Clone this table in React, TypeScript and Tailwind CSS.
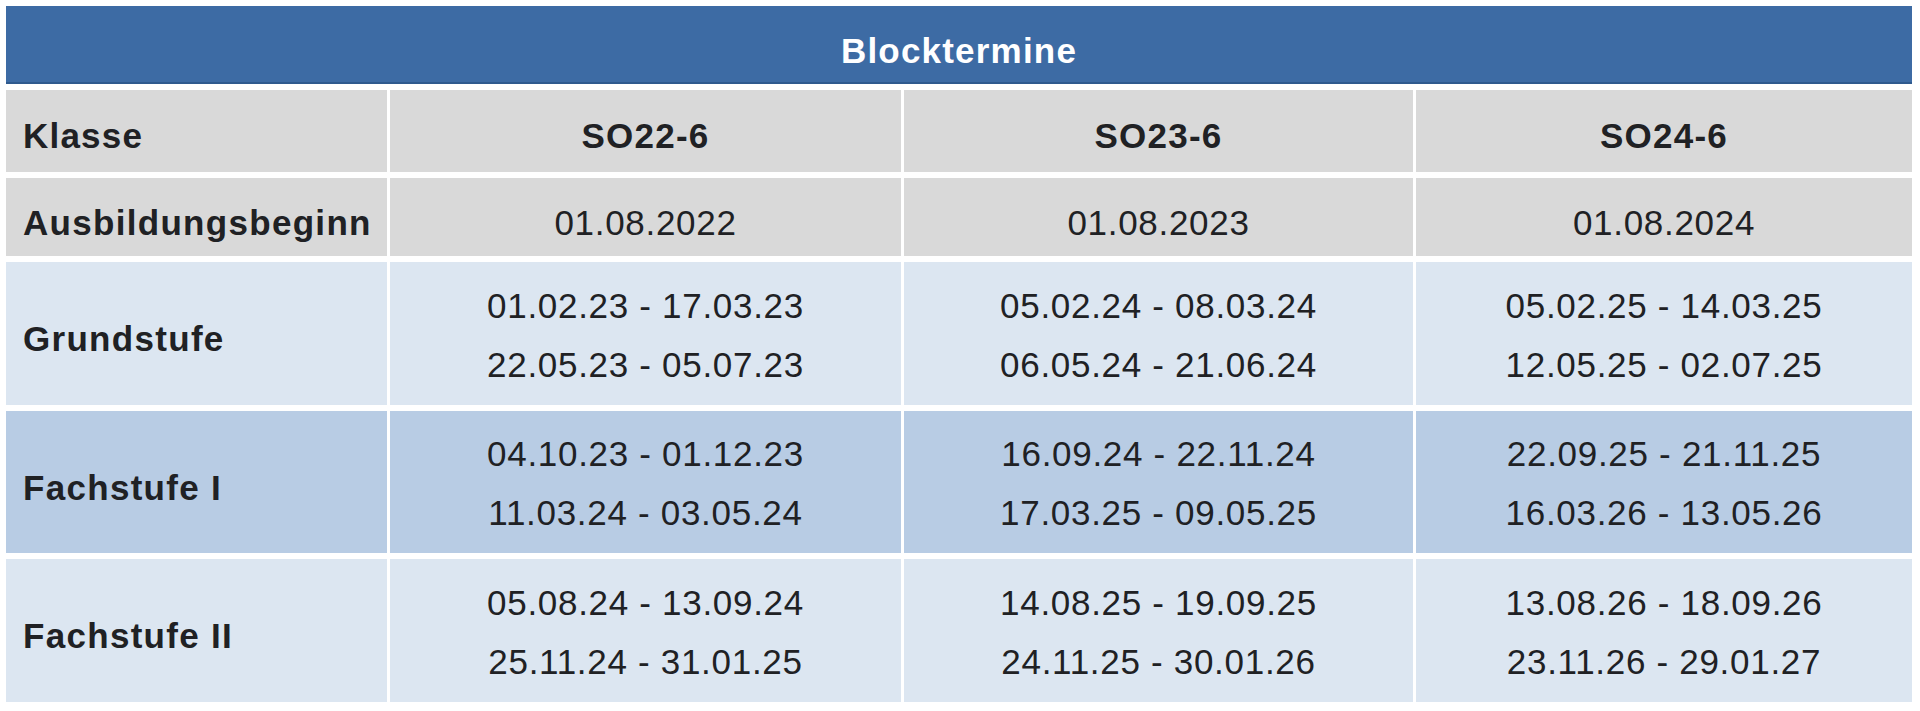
const columns = ['SO22-6', 'SO23-6', 'SO24-6'];
const starts = ['01.08.2022', '01.08.2023', '01.08.2024'];

const phases = [
  {
    label: 'Grundstufe',
    bg: 'bg-[#dce6f1]',
    dates: [
      ['01.02.23 - 17.03.23', '22.05.23 - 05.07.23'],
      ['05.02.24 - 08.03.24', '06.05.24 - 21.06.24'],
      ['05.02.25 - 14.03.25', '12.05.25 - 02.07.25'],
    ],
  },
  {
    label: 'Fachstufe I',
    bg: 'bg-[#b8cce4]',
    dates: [
      ['04.10.23 - 01.12.23', '11.03.24 - 03.05.24'],
      ['16.09.24 - 22.11.24', '17.03.25 - 09.05.25'],
      ['22.09.25 - 21.11.25', '16.03.26 - 13.05.26'],
    ],
  },
  {
    label: 'Fachstufe II',
    bg: 'bg-[#dce6f1]',
    dates: [
      ['05.08.24 - 13.09.24', '25.11.24 - 31.01.25'],
      ['14.08.25 - 19.09.25', '24.11.25 - 30.01.26'],
      ['13.08.26 - 18.09.26', '23.11.26 - 29.01.27'],
    ],
  },
];

export default function App() {
  return (
    <div
      className="w-[1920px] h-[711px] bg-white pt-[6px] pl-[6px] text-[#202124]"
      style={{ fontFamily: '"Liberation Sans", Arial, sans-serif' }}
    >
      <div className="grid grid-cols-[381px_511px_509px_496px] grid-rows-[78px_82px_78px_143px_142px_143px] gap-x-[3px] gap-y-[6px]">
        {/* Title */}
        <div className="col-span-4 flex items-center justify-center bg-[#3d6ba4] border-b-2 border-[#2f5a8e] pt-[14px] text-white text-[35px] font-bold tracking-[1.2px]">
          Blocktermine
        </div>

        {/* Klasse */}
        <div className="flex items-center bg-[#d9d9d9] pl-[17px] pt-[10px] text-[35px] font-bold tracking-[1.2px]">
          Klasse
        </div>
        {columns.map((c) => (
          <div
            key={c}
            className="flex items-center justify-center bg-[#d9d9d9] pt-[10px] text-[35px] font-bold tracking-[1.2px]"
          >
            {c}
          </div>
        ))}

        {/* Ausbildungsbeginn */}
        <div className="flex items-center bg-[#d9d9d9] pl-[17px] pt-[12px] text-[35px] font-bold tracking-[1.3px]">
          Ausbildungsbeginn
        </div>
        {starts.map((s) => (
          <div
            key={s}
            className="flex items-center justify-center bg-[#d9d9d9] pt-[12px] text-[35px] tracking-[0.7px]"
          >
            {s}
          </div>
        ))}

        {phases.map((p) => (
          <>
            <div
              key={p.label}
              className={`flex items-center ${p.bg} pl-[17px] pt-[12px] text-[35px] font-bold tracking-[1.3px]`}
            >
              {p.label}
            </div>
            {p.dates.map((pair, i) => (
              <div
                key={p.label + i}
                className={`flex flex-col items-center justify-center ${p.bg} pt-[2px] text-[35px] leading-[59px] tracking-[0.7px]`}
              >
                <span>{pair[0]}</span>
                <span>{pair[1]}</span>
              </div>
            ))}
          </>
        ))}
      </div>
    </div>
  );
}
